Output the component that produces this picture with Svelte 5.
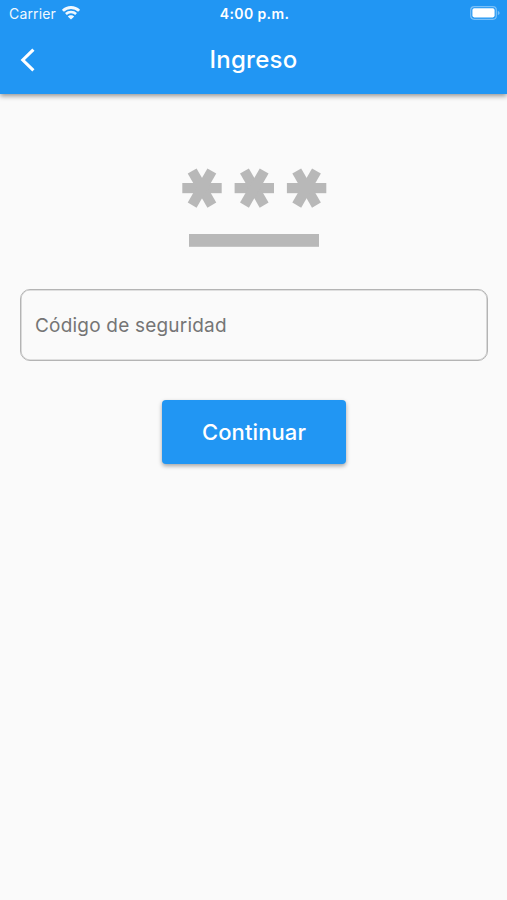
<script>
  let code = $state('');

  const stars = [20, 72.3, 124.6];
  const angles = [0, 60, 120];
</script>

<div class="screen">
  <header class="app-bar">
    <div class="status-bar">
      <div class="carrier">
        <span class="carrier-name">Carrier</span>
        <svg class="wifi" viewBox="0 0 18 14" fill="none" aria-hidden="true">
          <path d="M.9 4.8C5.4 .4 12.6 .4 17.1 4.8" stroke="currentColor" stroke-width="2.8" />
          <path d="M3.9 8C6.7 5.2 11.3 5.2 14.1 8" stroke="currentColor" stroke-width="2.5" />
          <path d="M9 13.6L5.8 10.5C7.5 8.8 10.5 8.8 12.2 10.5Z" fill="currentColor" />
        </svg>
      </div>
      <span class="time">4:00 p.m.</span>
      <svg class="battery" viewBox="0 0 30 14" fill="none" aria-hidden="true">
        <rect x=".7" y=".7" width="25.6" height="12.6" rx="3.5" stroke="#fff" stroke-opacity=".4" stroke-width="1.2" />
        <rect x="2.4" y="2.2" width="22.2" height="9.2" rx="1.8" fill="#fff" />
        <path d="M27.8 4.9c2.4.6 2.4 3.6 0 4.2z" fill="#fff" fill-opacity=".4" />
      </svg>
    </div>

    <div class="toolbar">
      <button class="back" aria-label="Atrás">
        <svg viewBox="0 0 16 26" fill="none" aria-hidden="true">
          <path d="M13.4 2.6L2.8 13L13.4 23.4" stroke="currentColor" stroke-width="3.1" />
        </svg>
      </button>
      <h1>Ingreso</h1>
    </div>
  </header>

  <main>
    <svg class="pin-icon" viewBox="0 0 145 80" aria-hidden="true">
      {#each stars as x}
        {#each angles as angle}
          <rect x={x - 19.7} y="15" width="39.4" height="10.2" transform="rotate({angle} {x} 20.1)" />
        {/each}
      {/each}
      <rect x="7" y="66" width="130" height="12.8" />
    </svg>

    <label class="field">
      {#if !code}
        <span class="hint">Código de seguridad</span>
      {/if}
      <input type="text" inputmode="numeric" bind:value={code} />
    </label>

    <button class="submit">Continuar</button>
  </main>
</div>

<style>
  :global(body) {
    margin: 0;
    background: #fafafa;
  }

  .screen {
    min-height: 100vh;
    background: #fafafa;
    font-family: Inter, Roboto, sans-serif;
  }

  .app-bar {
    box-sizing: border-box;
    height: 94px;
    background: #2196f3;
    color: #fff;
    box-shadow: 0 2px 5px rgba(0, 0, 0, 0.42);
  }

  .status-bar {
    display: grid;
    grid-template-columns: 1fr auto 1fr;
    align-items: center;
    height: 27px;
    padding: 0 7px 0 9px;
  }

  .carrier {
    display: flex;
    align-items: center;
    gap: 6px;
    font-size: 14px;
    letter-spacing: 0.15px;
    opacity: 0.94;
  }

  .wifi {
    width: 18px;
    height: 14px;
    margin-top: -1px;
  }

  .time {
    font-size: 14px;
    font-weight: 600;
    letter-spacing: 0.4px;
  }

  .battery {
    width: 30px;
    height: 14px;
    margin-top: -1px;
    justify-self: end;
  }

  .toolbar {
    display: grid;
    grid-template-columns: 56px 1fr 56px;
    align-items: center;
    height: 66px;
  }

  .back {
    display: flex;
    padding: 0 0 0 20px;
    border: none;
    background: none;
    color: #fff;
    cursor: pointer;
  }

  .back svg {
    width: 16px;
    height: 26px;
  }

  h1 {
    margin: 0;
    text-align: center;
    font-size: 24px;
    font-weight: 500;
    line-height: 1.2;
    letter-spacing: 0.25px;
  }

  main {
    display: flex;
    flex-direction: column;
    align-items: center;
    padding: 74px 19px 0 20px;
  }

  .pin-icon {
    width: 145px;
    height: 80px;
    fill: #b8b8b8;
  }

  .field {
    position: relative;
    box-sizing: border-box;
    display: flex;
    align-items: center;
    width: 100%;
    height: 72px;
    margin-top: 41px;
    padding: 0 14px;
    border: 1px solid #b4b4b4;
    border-radius: 10px;
    box-shadow: inset 0 0 0 0.6px #c4c4c4;
  }

  .hint {
    position: absolute;
    left: 14px;
    color: #757575;
    font-size: 19px;
    letter-spacing: 0.2px;
    pointer-events: none;
  }

  input {
    width: 100%;
    padding: 0;
    border: none;
    outline: none;
    background: none;
    font: inherit;
    font-size: 19px;
  }

  .submit {
    width: 184px;
    height: 64px;
    margin-top: 39px;
    padding: 0;
    border: none;
    border-radius: 4px;
    background: #2196f3;
    color: #fff;
    font: 500 22px Inter, Roboto, sans-serif;
    letter-spacing: 0.1px;
    box-shadow: 0 2px 4px rgba(0, 0, 0, 0.35);
    cursor: pointer;
  }
</style>
